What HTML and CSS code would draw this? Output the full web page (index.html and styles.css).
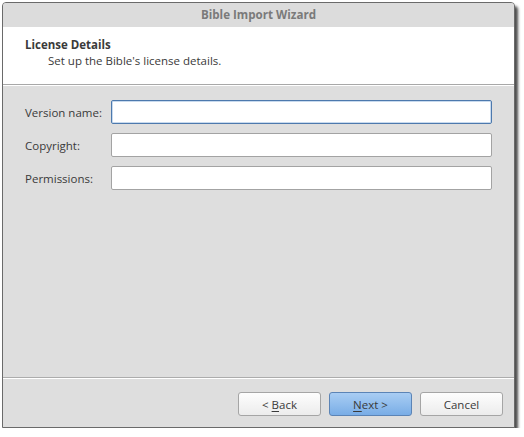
FILE: index.html
```html
<!DOCTYPE html>
<html>
<head>
<meta charset="utf-8">
<link rel="stylesheet" href="styles.css">
</head>
<body>
<div class="window">
  <div class="titlebar">Bible Import Wizard</div>
  <div class="header">
    <div class="header-title">License Details</div>
    <div class="header-sub">Set up the Bible's license details.</div>
  </div>
  <div class="content">
    <div class="form">
      <label class="lbl">Version name:</label>
      <div class="input focused"></div>
      <label class="lbl">Copyright:</label>
      <div class="input"></div>
      <label class="lbl">Permissions:</label>
      <div class="input"></div>
    </div>
  </div>
  <div class="footer">
    <button class="btn">&lt; <u>B</u>ack</button>
    <button class="btn primary"><u>N</u>ext &gt;</button>
    <button class="btn">Cancel</button>
  </div>
</div>
</body>
</html>
```
FILE: styles.css
```css
html, body {
  margin: 0;
  padding: 0;
  background: #ffffff;
}
body {
  font-family: "Open Sans", "DejaVu Sans", sans-serif;
  font-size: 11.5px;
  color: #3a3a3a;
}
.window {
  margin: 2px 0 0 2px;
  width: 511px;
  height: 424px;
  border: 1px solid #6a6a6a;
  border-radius: 4px 4px 0 0;
  box-shadow: 3px 4px 3px rgba(0, 0, 0, 0.7);
  background: #dedede;
  display: flex;
  flex-direction: column;
  overflow: hidden;
}
.titlebar {
  height: 24px;
  line-height: 24px;
  background: #dcdcdc;
  text-align: center;
  font-weight: bold;
  color: #7a7a7a;
  font-size: 11.6px;
}
.header {
  height: 58px;
  background: #ffffff;
  box-sizing: border-box;
  padding: 10px 0 0 22px;
  border-bottom: 1px solid #a8a8a8;
  box-shadow: 0 1px 0 #ffffff;
}
.header-title {
  font-weight: bold;
  line-height: 16px;
  color: #3a3a3a;
}
.header-sub {
  padding-left: 23px;
  line-height: 16px;
  color: #3a3a3a;
}
.content {
  flex: 1;
  margin-top: 1px;
  padding: 14px 22px 0 22px;
  border-bottom: 1px solid #acacac;
}
.form {
  display: grid;
  grid-template-columns: 86px 1fr;
  row-gap: 9px;
  align-items: center;
}
.lbl {
  color: #3a3a3a;
}
.input {
  height: 22px;
  background: #ffffff;
  border: 1px solid #a3a3a3;
  border-radius: 2px;
}
.input.focused {
  border-color: #4d79ad;
  box-shadow: inset 0 0 0 1px #c8daee;
}
.footer {
  height: 49px;
  flex: none;
  border-top: 1px solid #ffffff;
  box-sizing: border-box;
  display: flex;
  justify-content: flex-end;
  align-items: flex-start;
  gap: 8px;
  padding: 13px 11px 0 0;
}
.btn {
  font-family: "Open Sans", "DejaVu Sans", sans-serif;
  font-size: 11.5px;
  color: #3a3a3a;
  width: 83px;
  height: 24px;
  padding: 0;
  border: 1px solid #a5a5a5;
  border-radius: 3px;
  background: linear-gradient(#fdfdfd, #ececec);
}
.btn.primary {
  border-color: #5b84b6;
  background: linear-gradient(#a9cdf3, #79ade6);
}
.btn u {
  text-decoration-thickness: 1px;
  text-underline-offset: 2px;
}
```
